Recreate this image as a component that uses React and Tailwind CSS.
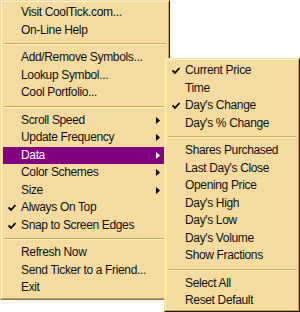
import React from 'react'

const main = [
  { label: 'Visit CoolTick.com...' },
  { label: 'On-Line Help' },
  { sep: true },
  { label: 'Add/Remove Symbols...' },
  { label: 'Lookup Symbol...' },
  { label: 'Cool Portfolio...' },
  { sep: true },
  { label: 'Scroll Speed', sub: true },
  { label: 'Update Frequency', sub: true },
  { label: 'Data', sub: true, active: true },
  { label: 'Color Schemes', sub: true },
  { label: 'Size', sub: true },
  { label: 'Always On Top', checked: true },
  { label: 'Snap to Screen Edges', checked: true },
  { sep: true },
  { label: 'Refresh Now' },
  { label: 'Send Ticker to a Friend...' },
  { label: 'Exit' },
]

const data = [
  { label: 'Current Price', checked: true },
  { label: 'Time' },
  { label: "Day's Change", checked: true },
  { label: "Day's % Change" },
  { sep: true },
  { label: 'Shares Purchased' },
  { label: "Last Day's Close" },
  { label: 'Opening Price' },
  { label: "Day's High" },
  { label: "Day's Low" },
  { label: "Day's Volume" },
  { label: 'Show Fractions' },
  { sep: true },
  { label: 'Select All' },
  { label: 'Reset Default' },
]

const Check = ({ color }) => (
  <svg width="8" height="8" viewBox="0 0 8 8" className="absolute left-[5px] top-[5px]">
    <path d="M0.5 3.5 L3 6 L7.5 1" fill="none" stroke={color} strokeWidth="1.8" />
  </svg>
)

const Arrow = ({ color }) => (
  <svg width="4" height="7" viewBox="0 0 4 7" className="absolute right-[7px] top-[5px]">
    <path d="M0 0 L4 3.5 L0 7 Z" fill={color} />
  </svg>
)

const Item = ({ item }) => {
  if (item.sep) {
    return (
      <div className="h-[10px] flex flex-col justify-center px-[1px]">
        <div className="h-px bg-[#d1a64a]" />
        <div className="h-px bg-[#fff3d6]" />
      </div>
    )
  }
  const fg = item.active ? '#ffffff' : '#000000'
  return (
    <div
      className={`relative h-[17.5px] leading-[17.5px] whitespace-nowrap pl-[18px] ${item.active ? 'bg-[#800080] text-white' : 'text-[#111]'}`}
    >
      {item.checked && <Check color={fg} />}
      {item.label}
      {item.sub && <Arrow color={fg} />}
    </div>
  )
}

const Menu = ({ items, className }) => (
  <div
    className={`bg-[#f4dca1] border border-t-[#f4dca1] border-l-[#f4dca1] border-r-[#1a1a1a] border-b-[#1a1a1a] ${className}`}
  >
    <div className="h-full border border-t-[#fff4d8] border-l-[#fff4d8] border-r-[#cf9f30] border-b-[#cf9f30] px-[1px] pt-[2px] pb-[1px]">
      {items.map((it, i) => (
        <Item key={i} item={it} />
      ))}
    </div>
  </div>
)

export default function App() {
  return (
    <div className="relative w-[300px] h-[312px] bg-white text-[12px] tracking-[-0.35px] font-['Liberation_Sans',Arial,sans-serif]">
      <Menu items={main} className="w-[170px] border-b-[#7a7a7a]" />
      <Menu items={data} className="absolute left-[164px] top-[58px] w-[136px] h-[254px]" />
    </div>
  )
}
